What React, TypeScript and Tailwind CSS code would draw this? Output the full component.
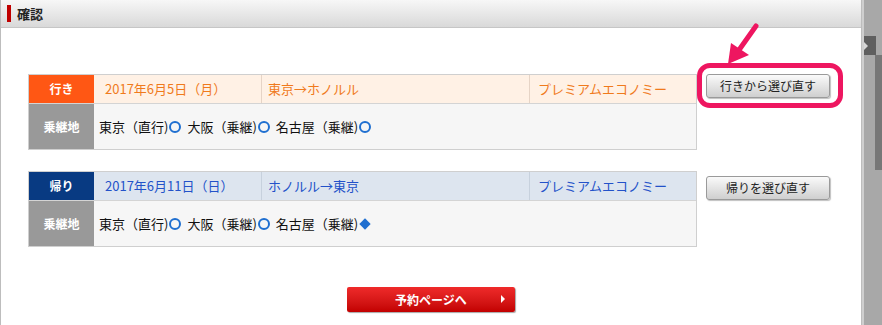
import React from "react";

const font = { fontFamily: '"Noto Sans CJK JP", "Noto Sans", sans-serif' };

type Leg = {
  label: string;
  date: string;
  route: string;
  cabin: string;
  last: "circle" | "diamond";
  button: string;
  outbound: boolean;
};

const legs: Leg[] = [
  {
    label: "行き",
    date: "2017年6月5日（月）",
    route: "東京→ホノルル",
    cabin: "プレミアムエコノミー",
    last: "circle",
    button: "行きから選び直す",
    outbound: true,
  },
  {
    label: "帰り",
    date: "2017年6月11日（日）",
    route: "ホノルル→東京",
    cabin: "プレミアムエコノミー",
    last: "diamond",
    button: "帰りを選び直す",
    outbound: false,
  },
];

const Mark = ({ kind }: { kind: "circle" | "diamond" }) =>
  kind === "circle" ? (
    <span className="inline-block w-[12px] h-[12px] ml-[1px] rounded-full border-2 border-[#1f6fd0]" />
  ) : (
    <span className="inline-block w-[8px] h-[8px] ml-[3px] rotate-45 bg-[#1f6fd0]" />
  );

const GrayButton = ({ children }: { children: React.ReactNode }) => (
  <button className="w-[124px] h-[24px] rounded-[3px] border border-[#9a9a9a] bg-gradient-to-b from-[#fafafa] to-[#cfcfcf] text-[12px] text-[#222] shadow-[1px_1px_1px_rgba(0,0,0,0.25)]">
    {children}
  </button>
);

const Stop = ({ name, kind }: { name: string; kind: "circle" | "diamond" }) => (
  <span className="flex items-center">
    {name}
    <Mark kind={kind} />
  </span>
);

const LegTable = ({ leg }: { leg: Leg }) => {
  const o = leg.outbound;
  const headBg = o ? "bg-[#fff1e5]" : "bg-[#dde5ef]";
  const headText = o ? "text-[#f07a1c]" : "text-[#2352c9]";
  const sep = o ? "border-[#e6d4c6]" : "border-[#c7d1dd]";
  return (
    <div className="w-[669px] border border-[#cfcfcf] text-[13px]">
      <div className="grid grid-cols-[65px_167px_268px_1fr] h-[28px]">
        <div
          className={`${o ? "bg-[#ff5714]" : "bg-[#083a82]"} text-white font-bold text-[12px] flex items-center justify-center`}
        >
          {leg.label}
        </div>
        <div className={`${headBg} ${headText} flex items-center pl-[11px]`}>{leg.date}</div>
        <div className={`${headBg} ${headText} ${sep} border-l flex items-center pl-[6px]`}>{leg.route}</div>
        <div className={`${headBg} ${headText} ${sep} border-l flex items-center pl-[8px]`}>{leg.cabin}</div>
      </div>
      <div className="flex h-[46px] border-t border-[#d4d4d4]">
        <div className="w-[65px] bg-[#999999] text-white font-bold text-[12px] flex items-center justify-center">
          乗継地
        </div>
        <div className="flex-1 bg-[#f6f6f6] text-[#111] flex items-center pl-[5px] gap-[6px]">
          <Stop name="東京（直行)" kind="circle" />
          <Stop name="大阪（乗継)" kind="circle" />
          <Stop name="名古屋（乗継)" kind={leg.last} />
        </div>
      </div>
    </div>
  );
};

export default function App() {
  return (
    <div className="relative w-[882px] h-[325px] flex overflow-hidden bg-white" style={font}>
      <div className="w-[862px] h-full border-l border-r border-[#bdbdbd] flex flex-col">
        <div className="h-[28px] flex items-center gap-[6px] pl-[6px] bg-gradient-to-b from-[#f7f7f7] to-[#d9d9d9] border-b border-[#c6c6c6]">
          <span className="w-[4px] h-[17px] bg-[#c00000]" />
          <span className="text-[13px] font-bold text-[#222]">確認</span>
        </div>
        <div className="flex-1 flex flex-col pl-[27px] pt-[46px]">
          {legs.map((leg, i) => (
            <div key={leg.label} className={`flex items-start gap-[9px] ${i === 1 ? "mt-[21px]" : ""}`}>
              <LegTable leg={leg} />
              <div className={`relative ${i === 0 ? "-mt-[2px]" : "mt-[3px]"}`}>
                <GrayButton>{leg.button}</GrayButton>
                {i === 0 && (
                  <div className="absolute -left-[9px] -right-[13px] -top-[9px] -bottom-[10px] border-[5px] border-[#ee1660] rounded-[13px]" />
                )}
              </div>
            </div>
          ))}
          <div className="flex justify-center mt-[40px] pr-[27px]">
            <button className="relative w-[168px] h-[25px] rounded-[2px] bg-gradient-to-b from-[#ef2a2a] to-[#c20000] text-white font-bold text-[12px] shadow-[1px_1px_1px_rgba(0,0,0,0.35)]">
              予約ページへ
              <span className="absolute right-[10px] top-[8px] w-0 h-0 border-y-[4px] border-y-transparent border-l-[4px] border-l-white" />
            </button>
          </div>
        </div>
      </div>
      <div className="flex-1 h-full bg-[#a8a8a8] border-l-[2px] border-[#cfcfcf] flex flex-col">
        <div className="h-[36px]" />
        <div className="flex">
          <div className="w-[12px] h-[19px] bg-[#5f5f5f] flex items-center">
            <span className="w-0 h-0 border-y-[4px] border-y-transparent border-l-[4px] border-l-[#d8d8d8]" />
          </div>
        </div>
        <div className="flex justify-end">
          <div className="w-[7px] h-[115px] bg-[#777777]" />
        </div>
      </div>
      <svg className="absolute left-0 top-0 pointer-events-none" width="882" height="325">
        <line x1="756" y1="26" x2="739" y2="50" stroke="#ee1660" strokeWidth="5" strokeLinecap="round" />
        <polygon points="728,64 731,43 749,55" fill="#ee1660" />
      </svg>
    </div>
  );
}
